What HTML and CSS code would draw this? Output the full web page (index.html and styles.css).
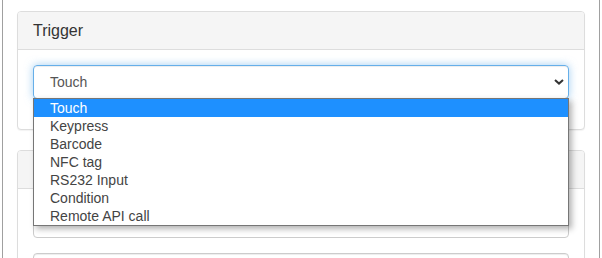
FILE: index.html
```html
<!DOCTYPE html>
<html>
<head>
<meta charset="utf-8">
<link rel="stylesheet" href="styles.css">
</head>
<body>
<div class="page">
  <div class="panel">
    <div class="panel-heading"><h3 class="panel-title">Trigger</h3></div>
    <div class="panel-body">
      <div class="form-group">
        <div class="select focus">
          <span>Touch</span>
          <svg class="chev" width="10" height="6" viewBox="0 0 10 6"><path d="M1 1 L5 4.6 L9 1" fill="none" stroke="#333" stroke-width="2"/></svg>
        </div>
        <div class="dropdown">
          <div class="opt sel">Touch</div>
          <div class="opt">Keypress</div>
          <div class="opt">Barcode</div>
          <div class="opt">NFC tag</div>
          <div class="opt">RS232 Input</div>
          <div class="opt">Condition</div>
          <div class="opt">Remote API call</div>
        </div>
      </div>
    </div>
  </div>
  <div class="panel">
    <div class="panel-heading"><div class="panel-title empty"></div></div>
    <div class="panel-body">
      <div class="form-group"><div class="select"></div></div>
      <div class="form-group"><div class="select"></div></div>
    </div>
  </div>
</div>
</body>
</html>
```
FILE: styles.css
```css
html, body {
  margin: 0;
  padding: 0;
  background: #fff;
  font-family: "Liberation Sans", Arial, sans-serif;
  font-size: 14px;
  color: #333;
  overflow: hidden;
}
.page {
  margin: 0 2px;
  height: 258px;
  overflow: hidden;
  box-sizing: border-box;
  border-left: 1px solid #a0a0a0;
  border-right: 1px solid #a0a0a0;
  padding: 11px 14px 0;
}
.panel {
  border: 1px solid #ddd;
  border-radius: 4px;
  margin-bottom: 20px;
  background: #fff;
  box-shadow: 0 1px 1px rgba(0,0,0,.05);
}
.panel-heading {
  background: #f5f5f5;
  border-bottom: 1px solid #ddd;
  border-radius: 3px 3px 0 0;
  padding: 10px 15px;
}
.panel-title {
  margin: 0;
  font-size: 16px;
  font-weight: normal;
  line-height: 17px;
  color: #333;
}
.panel-title.empty {
  height: 17px;
}
.panel-body {
  padding: 15px;
}
.form-group {
  position: relative;
  margin-bottom: 15px;
}
.select {
  height: 34px;
  box-sizing: border-box;
  border: 1px solid #ccc;
  border-radius: 4px;
  padding: 6px 4px 6px 16px;
  line-height: 20px;
  color: #555;
  display: flex;
  align-items: center;
  justify-content: space-between;
  box-shadow: inset 0 1px 1px rgba(0,0,0,.075);
}
.select.focus {
  border-color: #66afe9;
  box-shadow: inset 0 1px 1px rgba(0,0,0,.075), 0 0 8px rgba(102,175,233,.6);
}
.chev { display: block; }
.dropdown {
  position: absolute;
  top: 33px;
  left: 0;
  right: 0;
  z-index: 10;
  background: #fff;
  border: 1px solid #767676;
  box-shadow: 3px 3px 6px rgba(0,0,0,.3);
}
.opt {
  height: 18px;
  line-height: 18px;
  padding-left: 16px;
  color: #444;
  white-space: nowrap;
}
.opt.sel {
  background: #1e90ff;
  color: #fff;
}
```
